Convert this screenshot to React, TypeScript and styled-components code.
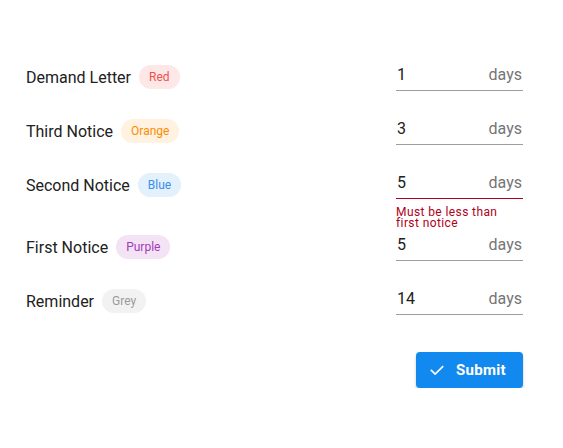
import styled, { createGlobalStyle } from "styled-components";

const GlobalStyle = createGlobalStyle`
  body {
    margin: 0;
    background: #ffffff;
    font-family: Roboto, "Liberation Sans", sans-serif;
  }
`;

const Page = styled.div`
  width: 563px;
  padding: 59px 40px 0 26px;
  box-sizing: border-box;
`;

const Row = styled.div`
  display: flex;
  justify-content: space-between;
  align-items: flex-start;
`;

const LabelCell = styled.div`
  display: flex;
  align-items: center;
  height: 24px;
  margin-top: 6px;
`;

const Label = styled.span`
  font-size: 16px;
  color: #212121;
`;

const chipColors: Record<string, { fg: string; bg: string }> = {
  Red: { fg: "#f0504c", bg: "#fde7e7" },
  Orange: { fg: "#fb8c00", bg: "#fff2e0" },
  Blue: { fg: "#3d8ee8", bg: "#e3f1fd" },
  Purple: { fg: "#a43ab8", bg: "#f3e3f5" },
  Grey: { fg: "#9a9a9a", bg: "#f2f2f2" },
};

const Chip = styled.span<{ tone: string }>`
  margin-left: 8px;
  height: 24px;
  padding: 0 10px;
  border-radius: 12px;
  display: inline-flex;
  align-items: center;
  font-size: 12px;
  color: ${(p) => chipColors[p.tone].fg};
  background: ${(p) => chipColors[p.tone].bg};
`;

const FieldCell = styled.div`
  width: 127px;
`;

const Field = styled.div<{ error?: boolean }>`
  height: 32px;
  padding-top: 4px;
  box-sizing: border-box;
  display: flex;
  justify-content: space-between;
  align-items: flex-start;
  border-bottom: 1px solid ${(p) => (p.error ? "#b00020" : "#9e9e9e")};
  font-size: 16px;
  line-height: 24px;
`;

const Value = styled.span`
  color: #212121;
  padding-left: 1px;
`;

const Unit = styled.span`
  color: #757575;
  padding-right: 1px;
`;

const Helper = styled.div<{ error?: boolean }>`
  height: ${(p) => (p.error ? "30px" : "22px")};
  box-sizing: border-box;
  padding-top: 8px;
  font-size: 12px;
  line-height: 11px;
  letter-spacing: 0.4px;
  color: #b00020;
`;

const Actions = styled.div`
  display: flex;
  justify-content: flex-end;
  margin-top: 15px;
`;

const SubmitButton = styled.button`
  display: flex;
  align-items: center;
  gap: 10px;
  height: 36px;
  width: 107px;
  padding: 0 0 0 12px;
  border: none;
  border-radius: 4px;
  background: #1289ee;
  color: #ffffff;
  font-family: Roboto, "Liberation Sans", sans-serif;
  font-size: 15px;
  font-weight: 700;
  letter-spacing: 0.3px;
  box-shadow: 0 2px 3px rgba(0, 0, 0, 0.22);
  cursor: pointer;
`;

const rows = [
  { label: "Demand Letter", tone: "Red", value: "1" },
  { label: "Third Notice", tone: "Orange", value: "3" },
  { label: "Second Notice", tone: "Blue", value: "5", error: "Must be less than first notice" },
  { label: "First Notice", tone: "Purple", value: "5" },
  { label: "Reminder", tone: "Grey", value: "14" },
];

const App = () => {
  return (
    <>
      <GlobalStyle />
      <Page>
        {rows.map((r) => (
          <Row key={r.label}>
            <LabelCell>
              <Label>{r.label}</Label>
              <Chip tone={r.tone}>{r.tone}</Chip>
            </LabelCell>
            <FieldCell>
              <Field error={!!r.error}>
                <Value>{r.value}</Value>
                <Unit>days</Unit>
              </Field>
              <Helper error={!!r.error}>{r.error}</Helper>
            </FieldCell>
          </Row>
        ))}
        <Actions>
          <SubmitButton>
            <svg width="18" height="18" viewBox="0 0 24 24" fill="none">
              <path d="M4.5 12.5l5 5L19.5 7.5" stroke="#fff" strokeWidth="2.2" strokeLinecap="square" />
            </svg>
            Submit
          </SubmitButton>
        </Actions>
      </Page>
    </>
  );
};

export default App;
